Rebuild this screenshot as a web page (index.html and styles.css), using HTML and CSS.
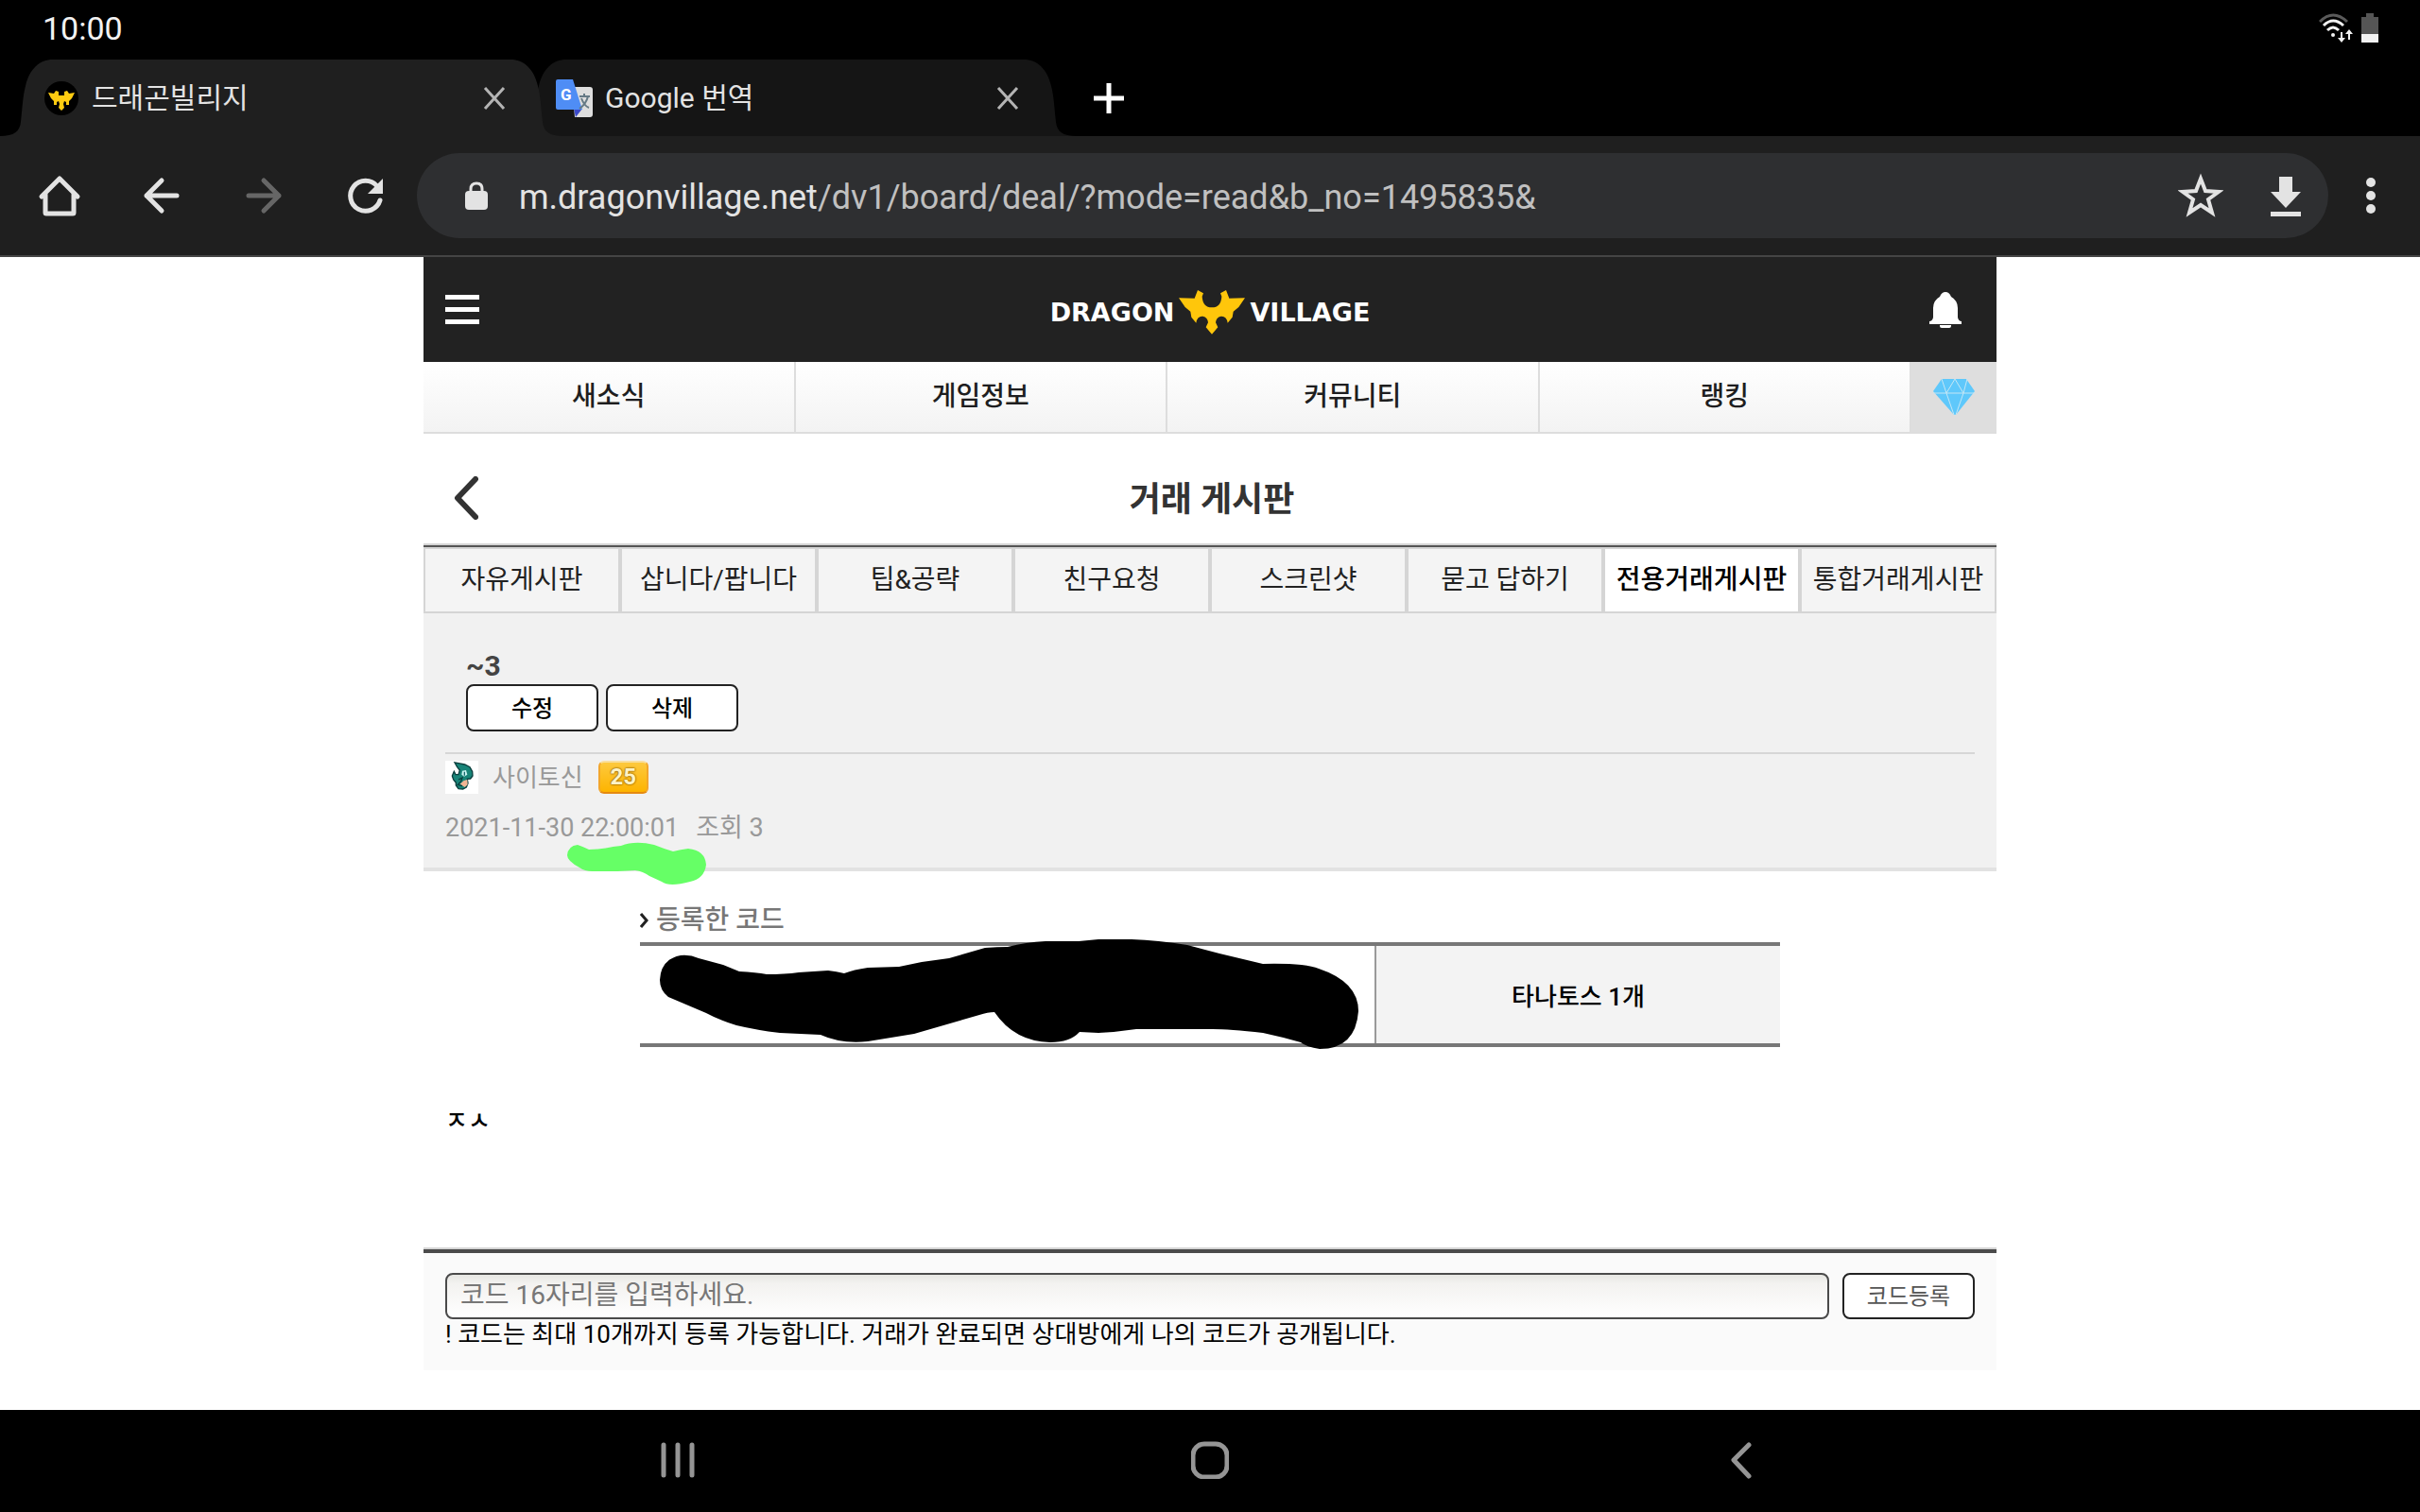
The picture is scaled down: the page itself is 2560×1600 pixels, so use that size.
FILE: index.html
```html
<!DOCTYPE html>
<html lang="ko">
<head>
    <meta charset="UTF-8">
    <meta name="viewport" content="width=device-width, initial-scale=1.0">
    <title>드래곤빌리지</title>
    <link rel="stylesheet" href="styles.css">
</head>
<body>
    <div class="status-bar">
        <span>10:00</span>
        <div class="status-icons">
            <svg width="36" height="32" viewBox="0 0 36 32" fill="none" stroke="#f2f2f2" stroke-width="3">
                <path d="M1 9 Q15 -5 30 9" stroke="#5a5a5a"/>
                <path d="M5 13 Q15 3 26 13"/>
                <path d="M9 18 Q15 12 21 18"/>
                <circle cx="15" cy="23" r="2" fill="#f2f2f2" stroke="none"/>
                <path d="M24 20 V26 M32 20 V28" stroke-width="2"/>
                <path d="M20 26 H28 L24 31 Z M28 22 H36 L32 17 Z" fill="#f2f2f2" stroke="none"/>
            </svg>
            <svg width="18" height="32" viewBox="0 0 18 32">
                <path d="M5 0 H13 V4 H18 V22 H0 V4 H5 Z" fill="#555"/>
                <path d="M0 22 H18 V31 H0 Z" fill="#f2f2f2"/>
            </svg>
        </div>
    </div>

    <div class="tab-strip">
        <div class="tab tab-active">
            <svg class="tab-shape" width="596" height="81" viewBox="0 0 596 81">
                <path d="M0 81 C15 81 21 76 22 66 C24 48 24 40 27 28 C31 10 42 0 56 0 H540 C554 0 565 10 569 28 C572 40 572 48 574 66 C575 76 581 81 596 81 Z"/>
            </svg>
            <svg class="favicon" width="40" height="40" viewBox="0 0 40 40">
                <circle cx="20" cy="20" r="18" fill="#000"/>
                <path d="M6 14 L12 15 L14 12 L17 13 V17 H23 V13 L26 12 L28 15 L34 14 L31 20 L28 23 L28 27 L25 27 V24 L23 23 L22 26 L23 30 L20 33 L17 30 L18 26 L17 23 L15 24 V27 L12 27 L12 23 L9 20 Z" fill="#fc1"/>
            </svg>
            <span class="tab-title">드래곤빌리지</span>
            <button class="tab-close" aria-label="탭 닫기">
                <svg width="24" height="28" viewBox="0 0 24 28"><path d="M2 3 L22 25 M22 3 L2 25"/></svg>
            </button>
        </div>
        <div class="tab">
            <svg class="tab-shape" width="596" height="81" viewBox="0 0 596 81">
                <path d="M0 81 C15 81 21 76 22 66 C24 48 24 40 27 28 C31 10 42 0 56 0 H540 C554 0 565 10 569 28 C572 40 572 48 574 66 C575 76 581 81 596 81 Z"/>
            </svg>
            <svg class="favicon" width="40" height="40" viewBox="0 0 40 40">
                <path d="M17 8 H36 Q39 8 39 11 V37 Q39 40 36 40 H20 Z" fill="#dedede"/>
                <path d="M19 31 H28 L21 40 Z" fill="#3a49c8"/>
                <path d="M2 0 H18 L28 32 H2 Q0 32 0 30 V2 Q0 0 2 0 Z" fill="#4f8df5"/>
                <path d="M25 18 H36 M30 15 V18 M34 18 Q32 26 25 31 M27 20 Q30 28 35 30" fill="none" stroke="#667a85" stroke-width="2"/>
                <text x="5" y="22" class="g-mark">G</text>
            </svg>
            <span class="tab-title">Google 번역</span>
            <button class="tab-close" aria-label="탭 닫기">
                <svg width="24" height="28" viewBox="0 0 24 28"><path d="M2 3 L22 25 M22 3 L2 25"/></svg>
            </button>
        </div>
        <button class="new-tab" aria-label="새 탭">
            <svg width="32" height="32" viewBox="0 0 32 32"><path d="M16 0 V32 M0 16 H32"/></svg>
        </button>
    </div>

    <div class="toolbar">
        <button class="tool" aria-label="홈">
            <svg width="48" height="48" viewBox="0 0 48 48"><path d="M5 25 L24 6 L43 25 M9 22 V42 Q9 43 10 43 H38 Q39 43 39 42 V22"/></svg>
        </button>
        <button class="tool" aria-label="뒤로">
            <svg width="48" height="48" viewBox="0 0 48 48"><path d="M40 24 H8 M24 8 L8 24 L24 40"/></svg>
        </button>
        <button class="tool tool-off" aria-label="앞으로">
            <svg width="48" height="48" viewBox="0 0 48 48"><path d="M8 24 H40 M24 8 L40 24 L24 40"/></svg>
        </button>
        <button class="tool" aria-label="새로고침">
            <svg width="48" height="48" viewBox="0 0 48 48"><path d="M36 14 A16 16 0 1 0 39 29"/><path d="M42 6 V22 H26 Z" class="solid"/></svg>
        </button>
        <div class="omnibox">
            <svg width="24" height="30" viewBox="0 0 24 30"><path d="M6 12 V8 Q6 2 12 2 Q18 2 18 8 V12" fill="none" stroke="#e3e3e3" stroke-width="3"/><rect y="10" width="24" height="20" rx="4" fill="#e3e3e3"/></svg>
            <a class="url" href="#">m.dragonvillage.net<span>/dv1/board/deal/?mode=read&amp;b_no=1495835&amp;</span></a>
            <button class="tool-small" aria-label="북마크">
                <svg width="48" height="48" viewBox="0 0 48 48"><path d="M24 6 L29 19 L43 20 L32 28 L36 42 L24 34 L12 42 L16 28 L5 20 L19 19 Z" fill="none" stroke="#e3e3e3" stroke-width="4"/></svg>
            </button>
            <button class="tool-small" aria-label="다운로드">
                <svg width="48" height="48" viewBox="0 0 48 48"><path d="M17 4 H31 V20 H40 L24 37 L8 20 H17 Z M8 41 H40 V46 H8 Z" fill="#e3e3e3"/></svg>
            </button>
        </div>
        <button class="more" aria-label="메뉴">
            <svg width="10" height="38" viewBox="0 0 10 38" fill="#e3e3e3"><circle cx="5" cy="5" r="5"/><circle cx="5" cy="19" r="5"/><circle cx="5" cy="33" r="5"/></svg>
        </button>
    </div>

    <main class="page">
        <header>
            <button class="menu-btn" aria-label="메뉴">
                <svg width="36" height="31" viewBox="0 0 36 31" fill="#fff"><path d="M0 0 H36 V5 H0 Z M0 13 H36 V18 H0 Z M0 26 H36 V31 H0 Z"/></svg>
            </button>
            <a class="logo" href="#">
                <span>DRAGON</span>
                <svg width="70" height="48" viewBox="0 0 210 142" fill="#ffc60b">
                    <path d="M0 27 L50 28 L60 2 L78 12 L74 22 Q76 57 105 57 Q134 57 136 22 L132 12 L150 2 L160 28 L210 27 L190 56 L173 70 L170 88 L155 106 Q152 84 134 85 Q118 88 117 105 L124 120 L105 142 L86 120 L93 105 Q92 88 76 85 Q58 84 55 106 L40 88 L37 70 L20 56 Z"/>
                </svg>
                <span>VILLAGE</span>
            </a>
            <button class="menu-btn" aria-label="알림">
                <svg width="34" height="38" viewBox="0 0 34 38" fill="#fff"><path d="M17 0 Q21 0 23 5 Q30 9 30 17 V27 Q31 31 34 31 V34 H0 V31 Q3 31 4 27 V17 Q4 9 11 5 Q13 0 17 0 Z M11 35 H23 V36 Q23 38 21 38 H13 Q11 38 11 36 Z"/></svg>
            </button>
        </header>

        <nav class="main-nav">
            <a href="#">새소식</a>
            <a href="#">게임정보</a>
            <a href="#">커뮤니티</a>
            <a href="#">랭킹</a>
            <a href="#" class="gem" aria-label="다이아">
                <svg width="44" height="38" viewBox="0 0 44 38">
                    <path d="M9 0 H35 L44 13 L24 38 H22 L0 13 Z" fill="#5fc8fb"/>
                    <path d="M0 15 H44 M9 0 L14 15 L23 0 L32 15 L36 0 M14 15 L22 38 M32 15 L24 38" fill="none" stroke="#c4e6f5" stroke-width="1"/>
                </svg>
            </a>
        </nav>

        <div class="board-title">
            <button class="back-btn" aria-label="뒤로">
                <svg width="26" height="46" viewBox="0 0 26 46"><path d="M23 3 L4 23 L23 43"/></svg>
            </button>
            <h1>거래 게시판</h1>
        </div>

        <nav class="board-tabs">
            <a href="#">자유게시판</a>
            <a href="#">삽니다/팝니다</a>
            <a href="#">팁&amp;공략</a>
            <a href="#">친구요청</a>
            <a href="#">스크린샷</a>
            <a href="#">묻고 답하기</a>
            <a href="#" class="current">전용거래게시판</a>
            <a href="#">통합거래게시판</a>
        </nav>

        <section class="post-head">
            <div class="post-top">
                <h2>~3</h2>
                <div class="post-actions">
                    <button class="btn">수정</button>
                    <button class="btn">삭제</button>
                </div>
            </div>
            <div class="author">
                <svg class="avatar" width="35" height="35" viewBox="0 0 105 105">
                    <path d="M0 0 H105 V105 H0 Z" fill="#fff"/>
                    <path d="M30 6 L42 8 L62 12 L78 20 L86 34 L87 48 L80 57 L70 58 L72 72 L67 84 L56 90 L42 89 L34 78 L34 70 L26 60 L22 48 L28 34 L33 44 L42 44 L46 30 L38 20 Z" fill="#188478" stroke="#0a3d3c" stroke-width="4"/>
                    <path d="M54 32 L66 30 L70 44 L60 50 L52 44 Z" fill="#c9f4f2"/>
                    <path d="M61 35 V47" stroke="#15666a" stroke-width="4"/>
                    <path d="M58 64 L70 60 L71 76 L62 84 L47 74 Z" fill="#f2b594"/>
                    <path d="M42 60 L54 54 L50 66 L40 76 L54 80" fill="none" stroke="#0a3d3c" stroke-width="4"/>
                </svg>
                <span class="name">사이토신</span>
                <span class="level">25</span>
            </div>
            <div class="meta"><span>2021-11-30 22:00:01</span><span>조회 3</span></div>
            <svg class="green-mark" width="147" height="46" viewBox="600 891 147 46">
                <path d="M611 894 Q617 896 623 899 C637 899 645 896 657 895 Q672 889 692 894 Q702 898 712 901 Q720 899 728 898 Q746 900 747 915 Q745 930 730 933 Q708 939 700 933 L687 927 Q680 922 672 921 L653 922 H627 Q618 922 613 918 Q600 911 600 905 Q601 895 611 894 Z" fill="#66ff66"/>
            </svg>
        </section>

        <section class="codes">
            <h3>
                <svg width="9" height="16" viewBox="0 0 9 16"><path d="M1 1 L7 8 L1 15" fill="none" stroke="#222" stroke-width="3"/></svg>
                등록한 코드
            </h3>
            <table>
                <tr>
                    <td class="code"></td>
                    <td class="item">타나토스 1개</td>
                </tr>
            </table>
            <svg class="black-mark" width="742" height="118" viewBox="697 993 742 118">
                <path d="M720 1011 Q730 1010 739 1014 L765 1021 L782 1028 Q800 1029 811 1031 Q830 1031 845 1029 L876 1027 Q885 1028 893 1030 Q903 1026 918 1024 L951 1023 L975 1018 L1004 1014 L1042 1003 Q1055 1002 1066 1002 Q1085 997 1106 996 L1141 996 L1162 994 H1197 Q1225 995 1256 1000 L1290 1009 L1336 1020 Q1380 1019 1395 1025 Q1437 1039 1437 1070 Q1434 1110 1396 1110 Q1382 1108 1376 1103 Q1355 1097 1336 1093 Q1300 1089 1283 1089 H1202 Q1182 1092 1162 1093 L1142 1092 Q1132 1103 1111 1103 Q1073 1102 1052 1071 Q1045 1071 1036 1074 L967 1094 L918 1102 Q890 1105 868 1095 L825 1093 Q800 1090 779 1085 Q762 1080 747 1072 L707 1055 Q698 1048 698 1037 Q699 1015 720 1011 Z"/>
            </svg>
        </section>

        <p class="post-body">ㅈㅅ</p>

        <form class="code-form">
            <div class="code-row">
                <input type="text" maxlength="16" aria-label="코드" placeholder="코드 16자리를 입력하세요.">
                <button type="button" class="btn btn-code">코드등록</button>
            </div>
            <p>! 코드는 최대 10개까지 등록 가능합니다. 거래가 완료되면 상대방에게 나의 코드가 공개됩니다.</p>
        </form>
    </main>

    <footer>
        <button aria-label="최근 앱">
            <svg width="40" height="40" viewBox="0 0 40 40"><path d="M5 4 V36 M20 4 V36 M35 4 V36"/></svg>
        </button>
        <button aria-label="홈">
            <svg width="40" height="40" viewBox="0 0 40 40"><rect x="2" y="3" width="36" height="35" rx="12"/></svg>
        </button>
        <button aria-label="뒤로">
            <svg width="40" height="40" viewBox="0 0 40 40"><path d="M27 4 L11 20 L27 37"/></svg>
        </button>
    </footer>
</body>
</html>
```

FILE: styles.css
```css
* {
    margin: 0;
    padding: 0;
    box-sizing: border-box;
    font-family: Roboto, "Noto Sans CJK KR", sans-serif;
}

body {
    background: #fff;
    color: #000;
    min-height: 100vh;
    display: flex;
    flex-direction: column;
}

svg {
    display: block;
    flex: none;
}

button {
    background: none;
    border: none;
    cursor: pointer;
}

a {
    color: inherit;
    text-decoration: none;
}

/* system status bar */
.status-bar {
    background: #000;
    color: #f2f2f2;
    height: 63px;
    padding: 0 44px 4px 45px;
    display: flex;
    align-items: center;
    justify-content: space-between;
    font-size: 34px;
    line-height: 40px;
}

.status-icons {
    display: flex;
    gap: 9px;
}

/* browser tabs */
.tab-strip {
    background: #000;
    height: 81px;
    padding-left: 26px;
    display: flex;
    align-items: center;
}

.tab {
    position: relative;
    width: 543px;
    height: 81px;
    padding: 0 34px 0 19px;
    display: flex;
    align-items: center;
    gap: 12px;
    color: #e3e3e3;
}

.tab-active {
    z-index: 1;
}

.tab-shape {
    position: absolute;
    left: -26px;
    top: 0;
    fill: #151515;
}

.tab-active .tab-shape {
    fill: #1f1f1f;
}

.favicon,
.tab-title,
.tab-close {
    position: relative;
}

.g-mark {
    fill: #fff;
    font-size: 17px;
    font-weight: 700;
}

.tab-title {
    flex: 1;
    font-size: 30px;
    line-height: 40px;
}

.tab-close path {
    stroke: #b4b4b4;
    stroke-width: 3;
}

.new-tab {
    margin-left: 45px;
}

.new-tab path {
    stroke: #fff;
    stroke-width: 5;
}

/* browser toolbar */
.toolbar {
    background: #1f1f1f;
    height: 128px;
    padding: 0 47px 0 39px;
    border-bottom: 2px solid #444;
    display: flex;
    align-items: center;
}

.tool {
    width: 48px;
    margin-right: 60px;
}

.tool path {
    fill: none;
    stroke: #e3e3e3;
    stroke-width: 5;
    stroke-linejoin: round;
    stroke-linecap: round;
}

.tool .solid {
    fill: #e3e3e3;
    stroke: none;
}

.tool-off path {
    stroke: #666;
}

.omnibox {
    flex: 1;
    height: 90px;
    margin-left: -30px;
    padding: 0 21px 0 51px;
    border-radius: 45px;
    background: #2e2f31;
    display: flex;
    align-items: center;
}

.url {
    flex: 1;
    margin-left: 33px;
    padding-top: 4px;
    color: #e3e3e3;
    font-size: 36px;
    line-height: 44px;
}

.url span {
    color: #c0c0c0;
}

.tool-small {
    margin-left: 42px;
}

.more {
    margin-left: 40px;
}

/* site */
.page {
    flex: 1;
    width: 65%;
    margin: 0 auto;
}

header {
    background: #222;
    height: 111px;
    padding: 0 23px;
    display: flex;
    align-items: center;
    justify-content: space-between;
}

.menu-btn {
    width: 48px;
}

.logo {
    display: flex;
    align-items: center;
    gap: 5px;
    padding-top: 4px;
    color: #fff;
}

.logo span {
    padding-top: 2px;
    font-family: "DejaVu Sans", sans-serif;
    font-weight: 700;
    font-size: 27px;
    line-height: 32px;
}

.main-nav {
    display: flex;
    height: 76px;
    border-bottom: 2px solid #ddd;
    background: linear-gradient(#fff, #f3f3f3);
}

.main-nav a {
    flex: 1;
    border-right: 2px solid #ddd;
    text-align: center;
    color: #1e1e20;
    font-size: 28px;
    font-weight: 500;
    line-height: 74px;
}

.main-nav .gem {
    flex: none;
    width: 90px;
    border: none;
    background: #dedede;
    display: flex;
    align-items: center;
    justify-content: center;
}

.board-title {
    height: 116px;
    padding: 20px 32px 0;
    display: flex;
    align-items: center;
}

.board-title h1 {
    flex: 1;
    margin-right: 22px;
    padding-top: 3px;
    text-align: center;
    color: #333;
    font-size: 36px;
    font-weight: 700;
    line-height: 48px;
}

.back-btn path {
    fill: none;
    stroke: #333;
    stroke-width: 6;
    stroke-linecap: round;
    stroke-linejoin: round;
}

.board-tabs {
    border-top: 2px solid #d5d5d5;
    display: grid;
    grid-template-columns: repeat(8, 1fr);
    box-shadow: inset 0 2px #555;
    padding-top: 2px;
}

.board-tabs a {
    height: 70px;
    border: 2px solid #d5d5d5;
    background: #f4f4f4;
    color: #222;
    text-align: center;
    font-size: 28px;
    line-height: 66px;
    white-space: nowrap;
}

.board-tabs .current {
    background: #fff;
    color: #000;
    font-weight: 500;
}

.post-head {
    position: relative;
    padding: 37px 23px 24px;
    border-bottom: 4px solid #e2e2e2;
    background: #f1f1f1;
}

.post-top {
    padding: 0 22px 22px;
    border-bottom: 2px solid #d6d6d6;
}

.post-top h2 {
    color: #444;
    font-size: 30px;
    font-weight: 700;
    line-height: 38px;
}

.post-actions {
    display: flex;
    gap: 8px;
}

.btn {
    width: 140px;
    height: 50px;
    padding-bottom: 4px;
    border: 2px solid #222;
    border-radius: 8px;
    background: #fff;
    color: #000;
    font-size: 24px;
    font-weight: 500;
}

.author {
    display: flex;
    align-items: center;
    margin-top: 7px;
    color: #999;
}

.name {
    margin: 0 16px 0 15px;
    padding-top: 2px;
    font-size: 26px;
    line-height: 33px;
}

.level {
    width: 53px;
    height: 35px;
    border-radius: 6px;
    border: 2px solid #f2a62c;
    border-top-color: #f9dfa0;
    border-bottom-color: #e58a12;
    background: linear-gradient(#fdc93e, #fdb400);
    color: #fff3c4;
    text-align: center;
    font-size: 24px;
    font-weight: 700;
    line-height: 31px;
    text-shadow: 0 0 2px #8a5a00, 0 0 2px #8a5a00;
}

.meta {
    display: flex;
    gap: 18px;
    margin-top: 18px;
    color: #999;
    font-size: 27px;
    line-height: 36px;
}

.green-mark {
    position: absolute;
    left: 152px;
    top: 242px;
}

.codes {
    position: relative;
    width: 1206px;
    max-width: 100%;
    margin: 0 auto;
    padding-top: 34px;
}

.codes h3 {
    display: flex;
    align-items: center;
    gap: 8px;
    color: #777;
    font-size: 28px;
    font-weight: 500;
    line-height: 36px;
    padding-bottom: 5px;
}

.codes table {
    width: 100%;
    border-collapse: separate;
    border-spacing: 0;
    border-top: 4px solid #777;
    border-bottom: 4px solid #777;
}

.codes td {
    height: 103px;
}

.item {
    width: 429px;
    border-left: 2px solid #999;
    background: #f3f3f3;
    text-align: center;
    font-size: 26px;
    font-weight: 500;
}

.black-mark {
    position: absolute;
    left: 20px;
    top: 71px;
}

.post-body {
    min-height: 212px;
    padding: 60px 23px 0;
    font-size: 26px;
    font-weight: 500;
    line-height: 36px;
}

.code-form {
    border-top: 2px solid #d5d5d5;
    box-shadow: inset 0 4px #4a4a4a;
    background: #fafafa;
    padding: 25px 23px 22px;
}

.code-row {
    display: flex;
    gap: 14px;
}

.code-row input {
    flex: 1;
    height: 49px;
    padding: 0 14px 2px;
    border: 2px solid #4a4a4a;
    border-radius: 8px;
    background: linear-gradient(#e6e6e2, #f3f2f0 20%, #fff);
    font-size: 28px;
}

.code-row input::placeholder {
    color: #777;
}

.btn-code {
    height: 49px;
    color: #555;
    font-weight: 400;
}

.code-form p {
    font-size: 26px;
    line-height: 32px;
}

/* system navigation bar */
footer {
    background: #000;
    height: 108px;
    padding: 0 17% 3px;
    display: flex;
    align-items: center;
}

footer button {
    flex: 1;
    display: flex;
    justify-content: center;
}

footer svg {
    fill: none;
    stroke: #959595;
    stroke-width: 5;
    stroke-linecap: round;
    stroke-linejoin: round;
}
```
